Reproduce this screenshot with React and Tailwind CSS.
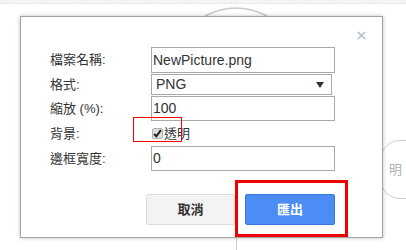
import { X } from 'lucide-react';

const fields = [
  { label: '檔案名稱:', value: 'NewPicture.png', type: 'input', h: 'h-[26px]' },
  { label: '格式:', value: 'PNG', type: 'select', h: 'h-[21px]' },
  { label: '縮放 (%):', value: '100', type: 'input', h: 'h-[25px]' },
];

const Field = ({ field }) => (
  <div className="flex items-center">
    <div className="w-[101px] text-[13px] text-[#333]">{field.label}</div>
    {field.type === 'select' ? (
      <div className={`${field.h} w-[181px] border border-[#a9a9a9] flex items-center justify-between pl-[4px] pr-[7px] text-[14px] text-[#333]`}>
        <span>{field.value}</span>
        <svg width="8" height="6" viewBox="0 0 8 6">
          <path d="M0 0 L8 0 L4 6 Z" fill="#3a2f3f" />
        </svg>
      </div>
    ) : (
      <div className={`${field.h} w-[184px] border border-[#a9a9a9] flex items-center pl-[1px] text-[14px] text-[#333]`}>
        {field.value}
      </div>
    )}
  </div>
);

const App = () => {
  return (
    <div
      className="relative w-[406px] h-[250px] overflow-hidden bg-white"
      style={{ fontFamily: '"Liberation Sans", "Noto Sans CJK TC", sans-serif' }}
    >
      {/* page behind the dialog */}
      <div className="h-[4px] bg-[#f4f4f4] border-b border-dashed border-[#e6e6e6]" />
      <svg className="absolute left-0 top-0" width="406" height="250">
        <path d="M205 16 Q236 0 267 16" fill="none" stroke="#c9c9c9" strokeWidth="1.5" />
        <line x1="236.5" y1="237" x2="236.5" y2="250" stroke="#cfcfcf" />
      </svg>
      <div className="absolute left-[380px] top-[140px] w-[60px] h-[59px] rounded-[20px] border border-[#cfcfcf] flex items-center pl-[8px] text-[13px] text-[#b0b0b0]">
        明
      </div>

      {/* dialog */}
      <div className="absolute left-[20px] top-[16px] w-[363px] h-[222px] bg-white border border-[#a3a3a3] shadow-[0_0_4px_rgba(0,0,0,0.25)]">
        <X className="absolute right-[14px] top-[12px] w-[13px] h-[13px] text-[#b3bfca]" strokeWidth={3} />

        <div className="flex flex-col gap-[1px] pt-[30px] pl-[29px]">
          {fields.map((f) => (
            <Field key={f.label} field={f} />
          ))}
          <div className="flex items-center h-[23px]">
            <div className="w-[102px] text-[13px] text-[#333]">背景:</div>
            <span className="w-[11px] h-[11px] rounded-[2px] bg-[#dedede] border border-[#b0b0b0] flex items-center justify-center">
              <svg width="9" height="9" viewBox="0 0 8 8">
                <path d="M1 4.5 L3 6.5 L7 1" fill="none" stroke="#222" strokeWidth="1.8" />
              </svg>
            </span>
            <span className="ml-[1px] text-[13px] text-[#333]">透明</span>
          </div>
          <div className="flex items-center">
            <div className="w-[101px] text-[13px] text-[#333]">邊框寬度:</div>
            <div className="h-[25px] w-[184px] border border-[#a9a9a9] flex items-center pl-[1px] text-[14px] text-[#333]">
              0
            </div>
          </div>
        </div>

        <div className="flex justify-end gap-[10px] mt-[23px] pr-[47px]">
          <button className="w-[89px] h-[31px] bg-[#f3f3f3] border border-[#dcdcdc] rounded-[2px] text-[13px] font-bold text-[#333]">
            取消
          </button>
          <button className="w-[90px] h-[31px] bg-[#4c8cf5] border border-[#3a78e0] rounded-[2px] text-[13px] font-bold text-white">
            匯出
          </button>
        </div>
      </div>

      {/* highlight boxes */}
      <div className="absolute left-[133px] top-[117px] w-[49px] h-[25px] border border-[#ff0000]" />
      <div className="absolute left-[235px] top-[180px] w-[113px] h-[57px] border-[3px] border-[#ee0000]" />
    </div>
  );
};

export default App;
